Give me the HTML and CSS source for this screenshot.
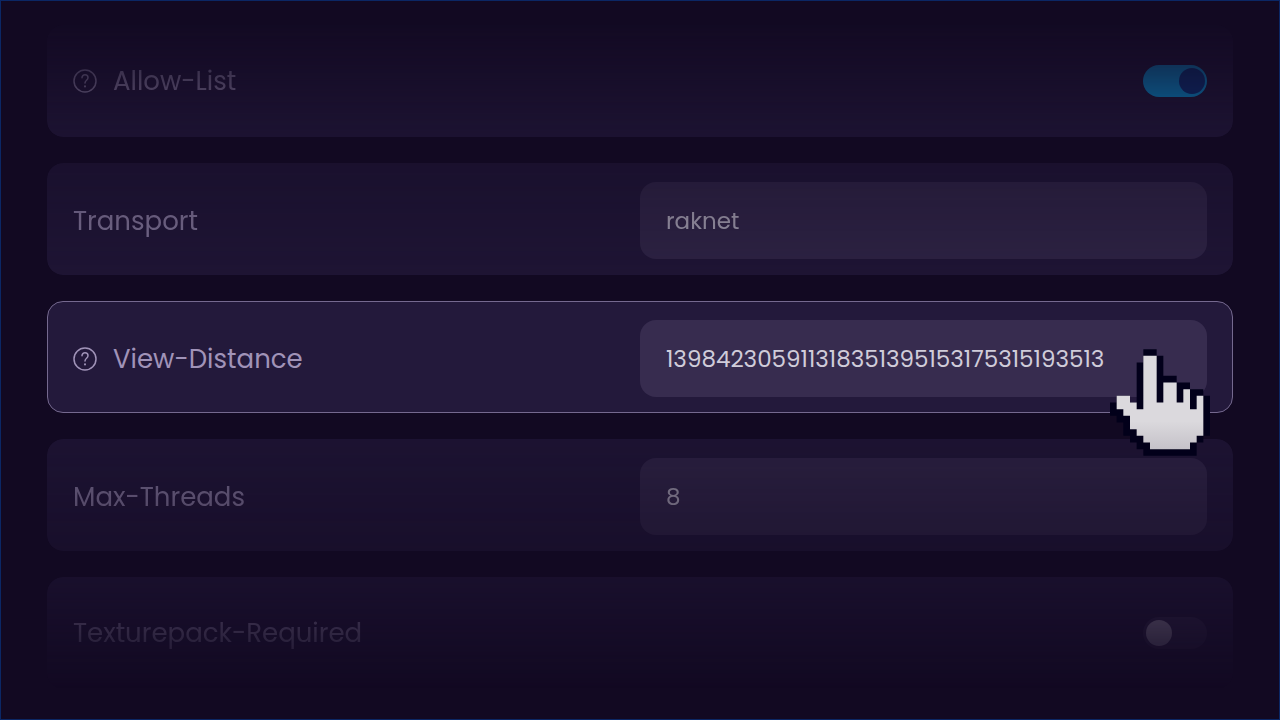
FILE: index.html
```html
<!DOCTYPE html>
<html lang="en">
<head>
  <meta charset="UTF-8">
  <meta name="viewport" content="width=device-width, initial-scale=1.0">
  <title>Server Settings</title>
  <link rel="stylesheet" href="styles.css">
</head>
<body>
  <main class="settings">
    <div class="row row-switch fade-top">
      <div class="name">
        <button class="help" type="button" aria-label="Help">
          <svg viewBox="0 0 24 24" width="24" height="24" fill="none" stroke="currentColor" stroke-width="1.5" stroke-linecap="round" stroke-linejoin="round">
            <circle cx="12" cy="12" r="11"/>
            <path d="M9 8.8c0-1.9 1.3-3 3-3s3 1.2 3 2.9c0 2.4-3 2.6-3 5.2"/>
            <path d="M12 17.3v.1" stroke-width="2"/>
          </svg>
        </button>
        <label for="allowList">Allow-List</label>
      </div>
      <input class="switch" type="checkbox" id="allowList" checked>
    </div>

    <div class="row fade-upper">
      <div class="name">
        <label for="transport">Transport</label>
      </div>
      <input class="field" type="text" id="transport" value="raknet">
    </div>

    <div class="row active">
      <div class="name">
        <button class="help" type="button" aria-label="Help">
          <svg viewBox="0 0 24 24" width="24" height="24" fill="none" stroke="currentColor" stroke-width="1.5" stroke-linecap="round" stroke-linejoin="round">
            <circle cx="12" cy="12" r="11"/>
            <path d="M9 8.8c0-1.9 1.3-3 3-3s3 1.2 3 2.9c0 2.4-3 2.6-3 5.2"/>
            <path d="M12 17.3v.1" stroke-width="2"/>
          </svg>
        </button>
        <label for="viewDistance">View-Distance</label>
      </div>
      <input class="field" type="text" id="viewDistance" value="139842305911318351395153175315193513">
      <svg class="pointer" viewBox="0 0 15 16" aria-hidden="true">
        <defs>
          <linearGradient id="skin" x1="0" y1="0" x2="0" y2="1">
            <stop offset="0.7" stop-color="#dbd9dd"/>
            <stop offset="1" stop-color="#c5c2c9"/>
          </linearGradient>
        </defs>
        <path fill="#02001a" d="M5 0h2v1h1v3h2v1h2v1h2v1h1v6h-1v1h-1v1h0v1h-8v-1h-1v-1h-1v-1h-1v-2h-1v-1h-1v-2h1v-1h2v1h1v-6h1z"/>
        <path fill="url(#skin)" d="M5 1h2v7h1v-3h2v3h1v-2h1v3h1v-2h1v6h-1v1h-1v1h-6v-1h-1v-1h-1v-1h-1v-2h-1v-1h-1v-2h2v1h1v1h1z"/>
      </svg>
    </div>

    <div class="row fade-lower">
      <div class="name">
        <label for="maxThreads">Max-Threads</label>
      </div>
      <input class="field" type="text" id="maxThreads" value="8">
    </div>

    <div class="row row-switch fade-bottom">
      <div class="name">
        <label for="texturepack">Texturepack-Required</label>
      </div>
      <input class="switch" type="checkbox" id="texturepack">
    </div>
  </main>
</body>
</html>
```
FILE: styles.css
```css
* {
  box-sizing: border-box;
}
body {
  margin: 0;
  background: #120922;
  font-family: Poppins, Inter, sans-serif;
  color: #a093b8;
}
.settings {
  display: flex;
  flex-direction: column;
  gap: 26px;
  min-height: 100vh;
  padding: 24px 46px;
  border: 1px solid #0b2765;
}
.row {
  position: relative;
  display: grid;
  grid-template-columns: 1fr 1fr;
  align-items: center;
  min-height: 112px;
  padding: 18px 25px 15px;
  background: #23193b;
  border: 1px solid transparent;
  border-radius: 16px;
}
.row-switch {
  padding: 16px 25px;
}
.active {
  z-index: 1;
  border-color: #75698f;
}
.name {
  display: flex;
  align-items: center;
  gap: 16px;
  font-size: 26px;
  line-height: 40px;
}
.help {
  display: flex;
  padding: 0;
  background: none;
  border: none;
  color: inherit;
  cursor: pointer;
}
.field {
  width: 100%;
  height: 77px;
  padding: 0 26px;
  background: #372c4f;
  border: none;
  border-radius: 16px;
  outline: none;
  color: #d0ccda;
  font-family: inherit;
  font-size: 23px;
}

/* toggle switches */
.switch {
  appearance: none;
  display: flex;
  align-items: center;
  justify-self: end;
  width: 64px;
  height: 32px;
  margin: 0;
  padding: 3px;
  background: #372c4f;
  border-radius: 16px;
  cursor: pointer;
}
.switch::before {
  content: "";
  width: 26px;
  height: 26px;
  border-radius: 50%;
  background: #a99fb5;
}
.switch:checked {
  justify-content: flex-end;
  padding: 2px;
  background: #06a8f0;
}
.switch:checked::before {
  background: #083a8a;
}

/* rows fade out away from the active one */
.fade-top {
  mask-image: linear-gradient(rgba(0, 0, 0, 0.06), rgba(0, 0, 0, 0.62));
}
.fade-upper {
  mask-image: linear-gradient(rgba(0, 0, 0, 0.48), rgba(0, 0, 0, 0.72));
}
.fade-lower {
  mask-image: linear-gradient(rgba(0, 0, 0, 0.62), rgba(0, 0, 0, 0.38));
}
.fade-bottom {
  mask-image: linear-gradient(rgba(0, 0, 0, 0.42), rgba(0, 0, 0, 0));
}

.pointer {
  position: absolute;
  top: 47px;
  right: 22px;
  width: 100px;
  height: 107px;
  pointer-events: none;
}
```
